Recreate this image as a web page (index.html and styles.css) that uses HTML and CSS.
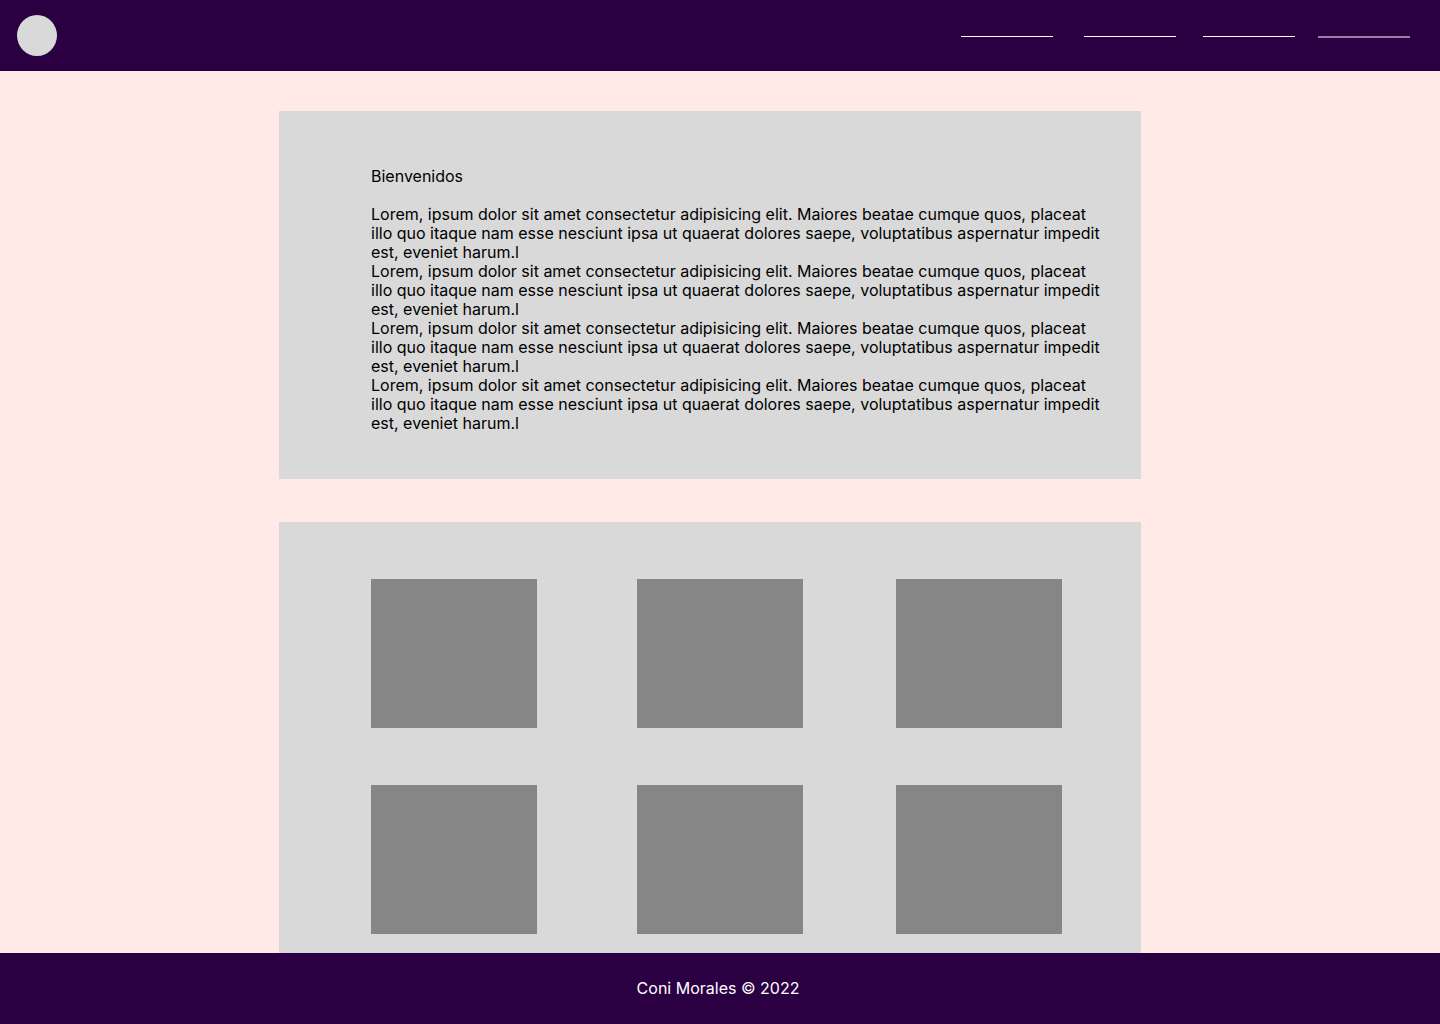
FILE: index.html
```html
<!DOCTYPE html>
<html lang="es">
<head>
  <meta charset="utf-8">
  <meta name="viewport" content="width=device-width, initial-scale=1">
  <title>Coni Morales</title>
  <link rel="stylesheet" href="styles.css">
</head>
<body>
  <header class="site-header">
    <a class="logo" href="#" aria-label="Inicio"></a>
    <nav class="site-nav" aria-label="Principal">
      <a class="nav-link" href="#bienvenidos" aria-label="Bienvenidos"></a>
      <a class="nav-link" href="#galeria" aria-label="Galería"></a>
      <a class="nav-link" href="#pie" aria-label="Contacto"></a>
      <a class="nav-link nav-link--muted" href="#" aria-label="Más"></a>
    </nav>
  </header>

  <main class="content">
    <section class="panel welcome" id="bienvenidos">
      <h1 class="welcome-title">Bienvenidos</h1>
      <p class="welcome-text">Lorem, ipsum dolor sit amet consectetur adipisicing elit. Maiores beatae cumque quos, placeat illo quo itaque nam esse nesciunt ipsa ut quaerat dolores saepe, voluptatibus aspernatur impedit est, eveniet harum.l</p>
      <p class="welcome-text">Lorem, ipsum dolor sit amet consectetur adipisicing elit. Maiores beatae cumque quos, placeat illo quo itaque nam esse nesciunt ipsa ut quaerat dolores saepe, voluptatibus aspernatur impedit est, eveniet harum.l</p>
      <p class="welcome-text">Lorem, ipsum dolor sit amet consectetur adipisicing elit. Maiores beatae cumque quos, placeat illo quo itaque nam esse nesciunt ipsa ut quaerat dolores saepe, voluptatibus aspernatur impedit est, eveniet harum.l</p>
      <p class="welcome-text">Lorem, ipsum dolor sit amet consectetur adipisicing elit. Maiores beatae cumque quos, placeat illo quo itaque nam esse nesciunt ipsa ut quaerat dolores saepe, voluptatibus aspernatur impedit est, eveniet harum.l</p>
    </section>

    <section class="panel gallery" id="galeria" aria-label="Galería">
      <div class="tile"></div>
      <div class="tile"></div>
      <div class="tile"></div>
      <div class="tile"></div>
      <div class="tile"></div>
      <div class="tile"></div>
    </section>
  </main>

  <footer class="site-footer" id="pie">
    <p class="credit">Coni Morales © 2022</p>
  </footer>
</body>
</html>
```

FILE: styles.css
```css
* {
  box-sizing: border-box;
}

body {
  display: flex;
  flex-direction: column;
  min-height: 100vh;
  margin: 0;
  background: #ffeae7;
  color: #000;
  font-family: Inter, "Liberation Sans", sans-serif;
  font-size: 16px;
  line-height: 19px;
}

.site-header {
  display: flex;
  align-items: flex-start;
  justify-content: space-between;
  padding: 15px 30px 15px 17px;
  background: #2a0042;
}

.logo {
  width: 40px;
  height: 41px;
  border-radius: 50%;
  background: #d9d9d9;
}

.site-nav {
  display: grid;
  grid-template-columns: 123px 119px 115px 92px;
}

.nav-link {
  width: 92px;
  padding-top: 21px;
  border-bottom: 1px solid #fff;
  align-self: start;
}

.nav-link--muted {
  border-bottom: 2px solid rgba(255, 255, 255, 0.5);
}

.content {
  display: flex;
  flex: 1;
  flex-direction: column;
  align-items: center;
  gap: 43px;
  padding: 40px 20px 0 0;
}

.panel {
  width: 100%;
  max-width: 862px;
  background: #d9d9d9;
}

.welcome {
  padding: 56px 40px 46px 92px;
}

.welcome-title {
  margin: 0 0 19px;
  font-size: 16px;
  font-weight: 400;
}

.welcome-text {
  margin: 0;
}

.gallery {
  display: grid;
  flex: 1;
  grid-template-columns: 266px 259px 166px;
  align-content: start;
  row-gap: 57px;
  padding: 57px 40px 19px 92px;
}

.tile {
  width: 166px;
  height: 149px;
  background: #868686;
}

.site-footer {
  padding: 26px 4px 26px 0;
  background: #2a0042;
  color: #fff;
  text-align: center;
}

.credit {
  margin: 0;
}
```
